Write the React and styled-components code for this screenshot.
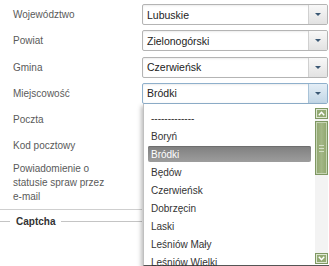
import React from "react";
import styled, { createGlobalStyle } from "styled-components";

const Global = createGlobalStyle`
  html, body { margin: 0; padding: 0; background: #fff; }
  body { font-family: "Liberation Sans", Arial, sans-serif; overflow: hidden; }
`;

const Page = styled.div`
  position: relative;
  width: 329px;
  height: 266px;
  overflow: hidden;
`;

const Form = styled.div`
  display: grid;
  grid-template-columns: 142px 186px;
  grid-auto-rows: 21px;
  row-gap: 5.3px;
  padding-top: 4px;
`;

const Label = styled.div`
  display: flex;
  align-items: center;
  padding-left: 13px;
  font-size: 10px;
  color: #5a5a5a;
`;

const SelectBox = styled.div`
  display: flex;
  align-items: stretch;
  box-sizing: border-box;
  height: 21px;
  border: 1px solid ${(p) => (p.$focused ? "#8fb0cc" : "#b4b4b4")};
  border-radius: 2px;
  background: #fff;
  box-shadow: inset 0 1px 2px rgba(0, 0, 0, 0.08);
`;

const SelectText = styled.div`
  flex: 1;
  display: flex;
  align-items: center;
  padding-left: 4px;
  font-size: 10.5px;
  color: #222;
`;

const ArrowButton = styled.div`
  width: 18px;
  display: flex;
  align-items: center;
  justify-content: center;
  border-left: 1px solid ${(p) => (p.$focused ? "#a9c3d8" : "#d0d0d0")};
  background: ${(p) =>
    p.$focused
      ? "linear-gradient(#e4eef6, #c2d6e6)"
      : "linear-gradient(#f8f8f8, #e2e2e2)"};
  border-radius: 0 1px 1px 0;
`;

const Triangle = styled.div`
  width: 0;
  height: 0;
  border-left: 3px solid transparent;
  border-right: 3px solid transparent;
  border-top: 3px solid #3b5874;
`;

const Empty = styled.div``;

const TallLabel = styled.div`
  grid-row: span 2;
  padding-left: 13px;
  padding-right: 30px;
  font-size: 10px;
  line-height: 14px;
  color: #5a5a5a;
`;

const Separator = styled.div`
  width: 142px;
  height: 1px;
  background: #cfcfcf;
  margin-top: 0;
`;

const Fieldset = styled.fieldset`
  margin: 6px 0 0 0;
  padding: 0;
  border: none;
  border-top: 1px solid #c4c4c4;
  width: 142px;
`;

const Legend = styled.legend`
  margin-left: 10px;
  padding: 0 6px;
  font-size: 10px;
  font-weight: bold;
  color: #333;
`;

const Dropdown = styled.div`
  position: absolute;
  left: 143px;
  top: 104px;
  width: 185px;
  height: 161px;
  display: flex;
  background: #fff;
  border-left: 1px solid #c0c0c0;
  border-bottom: 1px solid #555;
  box-shadow: -2px 2px 4px rgba(0, 0, 0, 0.25);
`;

const List = styled.div`
  flex: 1;
  padding: 5px 4px 0 4px;
  display: flex;
  flex-direction: column;
`;

const Item = styled.div`
  flex: 0 0 auto;
  height: 16px;
  margin: 1px 0;
  padding-left: 3px;
  display: flex;
  align-items: center;
  font-size: 10px;
  white-space: nowrap;
  color: ${(p) => (p.$active ? "#fff" : "#333")};
  border-radius: 2px;
  background: ${(p) =>
    p.$active ? "linear-gradient(#7f7f7f, #9d9d9d)" : "transparent"};
  box-shadow: ${(p) => (p.$active ? "inset 0 1px 0 #6e6e6e" : "none")};
`;

const Scrollbar = styled.div`
  width: 13px;
  margin: 4px 1px 1px 0;
  display: flex;
  flex-direction: column;
  background: #f3f3f3;
`;

const ScrollButton = styled.div`
  height: 11px;
  box-sizing: border-box;
  display: flex;
  align-items: center;
  justify-content: center;
  background: #93aa73;
  border: 1px solid #e8efe0;
  outline: 1px solid #7f9863;
  outline-offset: -1px;
  box-shadow: inset 0 0 0 1px #dfe8d4;
`;

const Track = styled.div`
  flex: 1;
  padding: 2px 0;
  display: flex;
  flex-direction: column;
`;

const Thumb = styled.div`
  height: 54px;
  box-sizing: border-box;
  background: linear-gradient(90deg, #8fa56d, #a3b786 50%, #8fa56d);
  border: 1px solid #7e9762;
  box-shadow: inset 0 0 0 1px #c6d4b4;
  display: flex;
  align-items: center;
  justify-content: center;
`;

const Grip = styled.div`
  width: 5px;
  height: 5px;
  border-top: 1px solid #d4dfc6;
  border-bottom: 1px solid #d4dfc6;
  position: relative;
  &::after {
    content: "";
    position: absolute;
    left: 0;
    right: 0;
    top: 2px;
    height: 1px;
    background: #d4dfc6;
  }
`;

const Chevron = ({ up }) => (
  <svg width="7" height="5" viewBox="0 0 7 5">
    <path
      d={up ? "M0.8 4.2 L3.5 1.3 L6.2 4.2" : "M0.8 0.8 L3.5 3.7 L6.2 0.8"}
      fill="none"
      stroke="#fff"
      strokeWidth="1.5"
    />
  </svg>
);

const Select = ({ value, focused }) => (
  <SelectBox $focused={focused}>
    <SelectText>{value}</SelectText>
    <ArrowButton $focused={focused}>
      <Triangle />
    </ArrowButton>
  </SelectBox>
);

const rows = [
  ["Województwo", "Lubuskie"],
  ["Powiat", "Zielonogórski"],
  ["Gmina", "Czerwieńsk"],
  ["Miejscowość", "Bródki", true],
];

const options = [
  "-------------",
  "Boryń",
  "Bródki",
  "Będów",
  "Czerwieńsk",
  "Dobrzęcin",
  "Laski",
  "Leśniów Mały",
  "Leśniów Wielki",
];

export default function App() {
  return (
    <Page>
      <Global />
      <Form>
        {rows.map(([label, value, focused]) => (
          <React.Fragment key={label}>
            <Label>{label}</Label>
            <Select value={value} focused={focused} />
          </React.Fragment>
        ))}
        <Label>Poczta</Label>
        <Empty />
        <Label>Kod pocztowy</Label>
        <Empty />
        <TallLabel>Powiadomienie o statusie spraw przez e-mail</TallLabel>
      </Form>
      <Separator />
      <Fieldset>
        <Legend>Captcha</Legend>
      </Fieldset>
      <Dropdown>
        <List>
          {options.map((o) => (
            <Item key={o} $active={o === "Bródki"}>
              {o}
            </Item>
          ))}
        </List>
        <Scrollbar>
          <ScrollButton>
            <Chevron up />
          </ScrollButton>
          <Track>
            <Thumb>
              <Grip />
            </Thumb>
          </Track>
          <ScrollButton>
            <Chevron />
          </ScrollButton>
        </Scrollbar>
      </Dropdown>
    </Page>
  );
}
